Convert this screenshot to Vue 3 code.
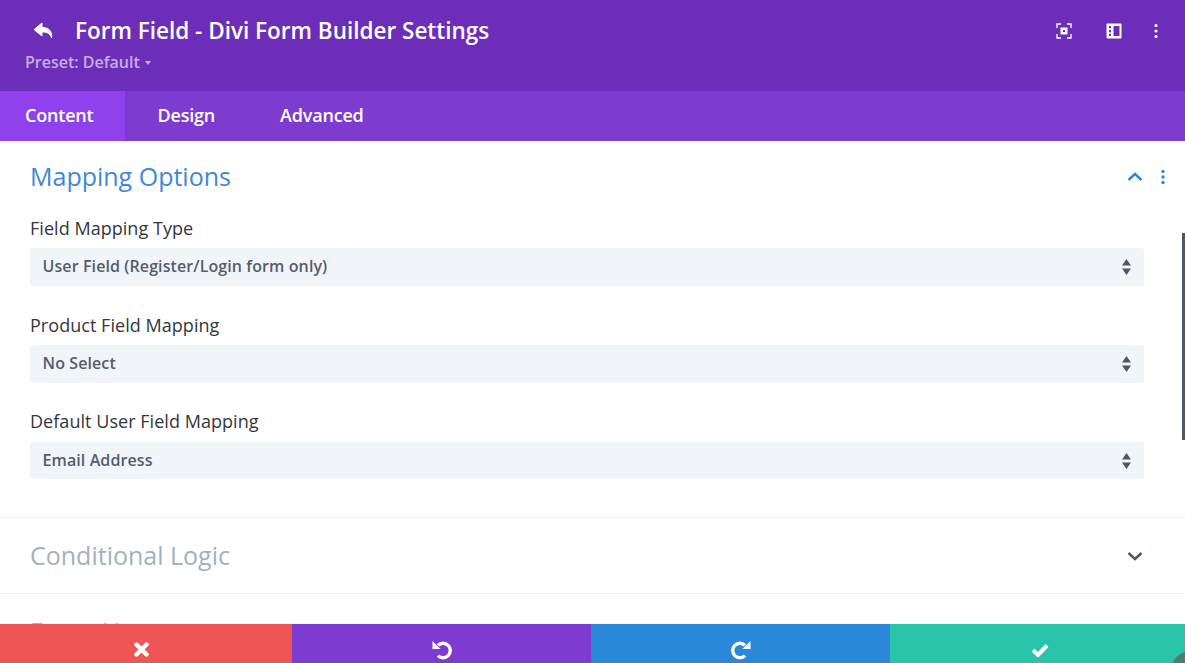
<!--
Divi 모듈 설정 패널. 헤더/탭/토글 섹션/하단 액션바.
-->
<template>
  <div class="panel">
    <header class="head">
      <div class="head-top">
        <button class="back" aria-label="Back">
          <svg width="22" height="18" viewBox="0 0 22 18"><path d="M9 1 1 7.600 9 14v-4c5 0 8 1 9.600 6 .9-7-3-10.600-9.600-10.600z" fill="#fff" stroke="#fff" stroke-width="1" stroke-linejoin="round"/></svg>
        </button>
        <h1>Form Field - Divi Form Builder Settings</h1>
        <div class="head-icons">
          <svg width="16" height="16" viewBox="0 0 16 16"><path d="M1 5V1h4M11 1h4v4M15 11v4h-4M5 15H1v-4" fill="none" stroke="#fff" stroke-width="1.300"/><path fill-rule="evenodd" d="M4.500 4.500h7v7h-7zM7 7v2h2V7z" fill="#fff"/></svg>
          <svg width="16" height="16" viewBox="0 0 16 16"><path fill-rule="evenodd" d="M1.500 0.500h13a1 1 0 0 1 1 1v13a1 1 0 0 1-1 1h-13a1 1 0 0 1-1-1v-13a1 1 0 0 1 1-1zM3 3v2.300h2V3zM3 6.900v2.300h2V6.900zM3 10.700V13h2v-2.300zM7.500 3v10h6V3z" fill="#fff"/></svg>
          <svg class="dots" width="6" height="16" viewBox="0 0 6 16"><circle cx="3" cy="2.500" r="1.600" fill="#fff"/><circle cx="3" cy="8" r="1.600" fill="#fff"/><circle cx="3" cy="13.500" r="1.600" fill="#fff"/></svg>
        </div>
      </div>
      <div class="preset">Preset: Default <span class="caret"></span></div>
    </header>

    <nav class="tabs">
      <a v-for="t in tabs" :key="t" class="tab" :class="{ active: t === 'Content' }">{{ t }}</a>
    </nav>

    <main class="body">
      <section class="toggle open">
        <div class="toggle-head">
          <h2>Mapping Options</h2>
          <svg class="chev" width="16" height="10" viewBox="0 0 16 10"><path d="M1.500 8 8 2l6.500 6" fill="none" stroke="#2b87da" stroke-width="2.400"/></svg>
          <svg class="more" width="6" height="16" viewBox="0 0 6 16"><circle cx="3" cy="2.500" r="1.700" fill="#2b87da"/><circle cx="3" cy="8" r="1.700" fill="#2b87da"/><circle cx="3" cy="13.500" r="1.700" fill="#2b87da"/></svg>
        </div>
        <div v-for="f in fields" :key="f.label" class="field">
          <label>{{ f.label }}</label>
          <div class="select">
            <span>{{ f.value }}</span>
            <svg width="9" height="16" viewBox="0 0 9 16"><path d="M4.500 0 9 6.500H0zM4.500 16 0 9.500h9z" fill="#4c5866"/></svg>
          </div>
        </div>
      </section>
      <section class="toggle closed">
        <h2>Conditional Logic</h2>
        <svg class="chev" width="16" height="10" viewBox="0 0 16 10"><path d="M1.500 2 8 8l6.500-6" fill="none" stroke="#4c5866" stroke-width="2.400"/></svg>
      </section>
      <section class="toggle closed">
        <h2 class="clipped">Form Hover</h2>
      </section>
      <div class="scroll-thumb"></div>
    </main>

    <footer class="actions">
      <button class="act red" aria-label="Cancel">
        <svg width="15" height="15" viewBox="0 0 15 15"><path d="M2.500 2.500l10 10M12.500 2.500l-10 10" stroke="#fff" stroke-width="4.400" stroke-linecap="round" fill="none"/></svg>
      </button>
      <button class="act purple" aria-label="Undo">
        <svg width="20" height="20" viewBox="0 0 20 20"><path d="M6 5.400A7.200 7.200 0 1 1 6 15.600" fill="none" stroke="#fff" stroke-width="3.400"/><path d="M.5 1v8h8z" fill="#fff"/></svg>
      </button>
      <button class="act blue" aria-label="Redo">
        <svg width="20" height="20" viewBox="0 0 20 20"><path d="M14 5.400A7.200 7.200 0 1 0 14 15.600" fill="none" stroke="#fff" stroke-width="3.400"/><path d="M19.500 1v8h-8z" fill="#fff"/></svg>
      </button>
      <button class="act green" aria-label="Save">
        <svg width="18" height="14" viewBox="0 0 18 14"><path d="M2 7l5 5 9-9.500" fill="none" stroke="#fff" stroke-width="4"/></svg>
      </button>
      <span class="help"></span>
    </footer>
  </div>
</template>

<script setup>
const tabs = ['Content', 'Design', 'Advanced']
const fields = [
  { label: 'Field Mapping Type', value: 'User Field (Register/Login form only)' },
  { label: 'Product Field Mapping', value: 'No Select' },
  { label: 'Default User Field Mapping', value: 'Email Address' },
]
</script>

<style>
html, body { margin: 0; overflow: hidden; background: #fff; }
</style>

<style scoped>
.panel {
  position: relative;
  width: 1185px;
  height: 663px;
  overflow: hidden;
  display: flex;
  flex-direction: column;
  font-family: "Open Sans", sans-serif;
}
.head {
  height: 91px;
  box-sizing: border-box;
  flex: none;
  background: #6c2eb9;
  padding: 15px 26px 0 25px;
}
.head-top {
  display: flex;
  align-items: center;
  height: 32px;
}
.back {
  border: 0;
  background: none;
  padding: 0;
  margin: 0 20px 0 8px;
  width: 22px;
  height: 18px;
  display: flex;
}
h1 {
  margin: 0;
  color: #fff;
  font-size: 22.500px;
  font-weight: 600;
  line-height: 32px;
}
.head-icons {
  margin-left: auto;
  display: flex;
  align-items: center;
  gap: 34px;
}
.head-icons .dots { margin-left: -3px; }
.preset {
  margin-top: 4px;
  color: #c7aee6;
  font-size: 16px;
  font-weight: 600;
  line-height: 22px;
}
.caret {
  display: inline-block;
  margin-left: 1px;
  vertical-align: 3px;
  border: 3px solid transparent;
  border-top: 4px solid #c7aee6;
  border-bottom: 0;
}
.tabs {
  flex: none;
  display: flex;
  height: 50px;
  background: #7e3bd0;
}
.tab {
  width: 125px;
  box-sizing: border-box;
  padding-left: 25px;
  color: #fff;
  font-size: 18px;
  font-weight: 600;
  line-height: 48px;
  letter-spacing: -0.2px;
}
.tab + .tab { width: auto; padding: 0 32.500px; }
.tab.active { background: #8f42ec; }
.body {
  position: relative;
  flex: 1;
  min-height: 0;
  overflow: hidden;
}
.toggle { border-bottom: 1px solid #f1f1f1; box-sizing: border-box; }
.toggle.open { height: 377px; padding: 0 41px 0 30px; }
.toggle-head {
  display: flex;
  align-items: center;
  height: 72px;
  margin-bottom: 2.950px;
}
h2 {
  margin: 0 0 2px;
  font-size: 25px;
  font-weight: 400;
  line-height: 32px;
  color: #a3b0c2;
}
.open h2 { color: #4187dd; }
h2.clipped { word-spacing: 4px; }
.toggle-head .chev { margin-left: auto; margin-top: -1px; }
.more { margin: 0 -22px 0 17.500px; }
.field { margin-bottom: 26.850px; }
.field label {
  display: block;
  color: #32373c;
  font-size: 18px;
  font-weight: 500;
  line-height: 24px;
  letter-spacing: 0.04px;
  margin-bottom: 8.300px;
}
.select {
  height: 37.600px;
  box-sizing: border-box;
  padding: 0 13px 2px 12.500px;
  display: flex;
  align-items: center;
  justify-content: space-between;
  background: #f1f5f9;
  border-radius: 3px;
  color: #525e6c;
  font-size: 16px;
  font-weight: 600;
  letter-spacing: 0.1px;
}
.select svg { margin-bottom: -2px; }
.toggle.closed {
  height: 76px;
  padding: 0 42.500px 0 30px;
  display: flex;
  align-items: center;
  justify-content: space-between;
}
.closed:last-of-type { align-items: flex-start; padding-top: 21px; }
.scroll-thumb {
  position: absolute;
  right: 0;
  top: 92px;
  width: 3px;
  height: 207px;
  background: #4c5866;
}
.actions {
  position: absolute;
  left: 0;
  right: 0;
  bottom: 0;
  height: 39px;
  display: flex;
}
.act {
  border: 0;
  padding: 12px 0 0;
  display: flex;
  align-items: center;
  justify-content: center;
}
.red { width: 292px; background: #ef5555; padding-right: 10px; }
.purple { width: 299px; background: #7e3bd0; }
.blue { width: 299px; background: #2b87da; }
.green { flex: 1; background: #29c4a9; padding-left: 5px; }
.help {
  position: absolute;
  right: -26px;
  bottom: -28px;
  width: 40px;
  height: 40px;
  border-radius: 50%;
  background: #4c7d7d;
}
</style>
